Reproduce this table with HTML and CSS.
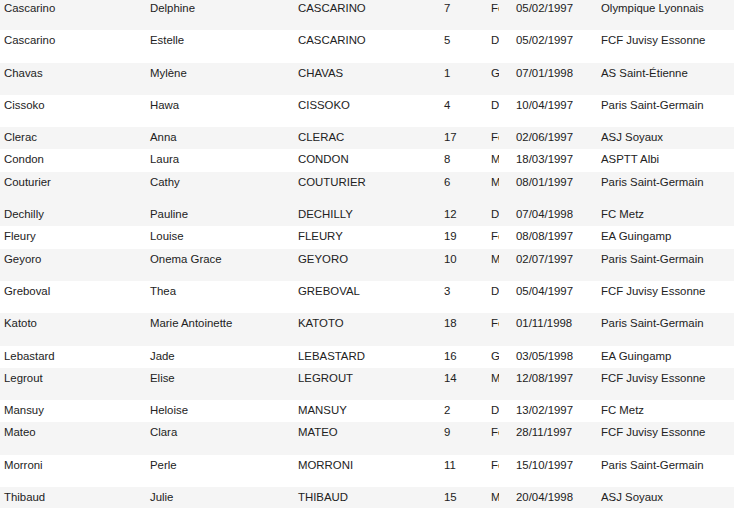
FILE: index.html
```html
<!DOCTYPE html>
<html>
<head>
<meta charset="utf-8">
<link rel="stylesheet" href="styles.css">
</head>
<body>
<div class="table">
  <div class="row tall grey"><div class="c">Cascarino</div><div class="c">Delphine</div><div class="c">CASCARINO</div><div class="c">7</div><div class="c pos"><span>Forward</span></div><div class="c">05/02/1997</div><div class="c">Olympique Lyonnais</div></div>
  <div class="row tall"><div class="c">Cascarino</div><div class="c">Estelle</div><div class="c">CASCARINO</div><div class="c">5</div><div class="c pos"><span>Defender</span></div><div class="c">05/02/1997</div><div class="c">FCF Juvisy Essonne</div></div>
  <div class="row tall grey"><div class="c">Chavas</div><div class="c">Mylène</div><div class="c">CHAVAS</div><div class="c">1</div><div class="c pos"><span>Goalkeeper</span></div><div class="c">07/01/1998</div><div class="c">AS Saint-Étienne</div></div>
  <div class="row tall"><div class="c">Cissoko</div><div class="c">Hawa</div><div class="c">CISSOKO</div><div class="c">4</div><div class="c pos"><span>Defender</span></div><div class="c">10/04/1997</div><div class="c">Paris Saint-Germain</div></div>
  <div class="row short grey"><div class="c">Clerac</div><div class="c">Anna</div><div class="c">CLERAC</div><div class="c">17</div><div class="c pos"><span>Forward</span></div><div class="c">02/06/1997</div><div class="c">ASJ Soyaux</div></div>
  <div class="row short"><div class="c">Condon</div><div class="c">Laura</div><div class="c">CONDON</div><div class="c">8</div><div class="c pos"><span>Midfielder</span></div><div class="c">18/03/1997</div><div class="c">ASPTT Albi</div></div>
  <div class="row tall grey"><div class="c">Couturier</div><div class="c">Cathy</div><div class="c">COUTURIER</div><div class="c">6</div><div class="c pos"><span>Midfielder</span></div><div class="c">08/01/1997</div><div class="c">Paris Saint-Germain</div></div>
  <div class="row short grey"><div class="c">Dechilly</div><div class="c">Pauline</div><div class="c">DECHILLY</div><div class="c">12</div><div class="c pos"><span>Defender</span></div><div class="c">07/04/1998</div><div class="c">FC Metz</div></div>
  <div class="row short"><div class="c">Fleury</div><div class="c">Louise</div><div class="c">FLEURY</div><div class="c">19</div><div class="c pos"><span>Forward</span></div><div class="c">08/08/1997</div><div class="c">EA Guingamp</div></div>
  <div class="row tall grey"><div class="c">Geyoro</div><div class="c">Onema Grace</div><div class="c">GEYORO</div><div class="c">10</div><div class="c pos"><span>Midfielder</span></div><div class="c">02/07/1997</div><div class="c">Paris Saint-Germain</div></div>
  <div class="row tall"><div class="c">Greboval</div><div class="c">Thea</div><div class="c">GREBOVAL</div><div class="c">3</div><div class="c pos"><span>Defender</span></div><div class="c">05/04/1997</div><div class="c">FCF Juvisy Essonne</div></div>
  <div class="row tall grey"><div class="c">Katoto</div><div class="c">Marie Antoinette</div><div class="c">KATOTO</div><div class="c">18</div><div class="c pos"><span>Forward</span></div><div class="c">01/11/1998</div><div class="c">Paris Saint-Germain</div></div>
  <div class="row short"><div class="c">Lebastard</div><div class="c">Jade</div><div class="c">LEBASTARD</div><div class="c">16</div><div class="c pos"><span>Goalkeeper</span></div><div class="c">03/05/1998</div><div class="c">EA Guingamp</div></div>
  <div class="row tall grey"><div class="c">Legrout</div><div class="c">Elise</div><div class="c">LEGROUT</div><div class="c">14</div><div class="c pos"><span>Midfielder</span></div><div class="c">12/08/1997</div><div class="c">FCF Juvisy Essonne</div></div>
  <div class="row short"><div class="c">Mansuy</div><div class="c">Heloise</div><div class="c">MANSUY</div><div class="c">2</div><div class="c pos"><span>Defender</span></div><div class="c">13/02/1997</div><div class="c">FC Metz</div></div>
  <div class="row tall grey"><div class="c">Mateo</div><div class="c">Clara</div><div class="c">MATEO</div><div class="c">9</div><div class="c pos"><span>Forward</span></div><div class="c">28/11/1997</div><div class="c">FCF Juvisy Essonne</div></div>
  <div class="row tall"><div class="c">Morroni</div><div class="c">Perle</div><div class="c">MORRONI</div><div class="c">11</div><div class="c pos"><span>Forward</span></div><div class="c">15/10/1997</div><div class="c">Paris Saint-Germain</div></div>
  <div class="row tall grey"><div class="c">Thibaud</div><div class="c">Julie</div><div class="c">THIBAUD</div><div class="c">15</div><div class="c pos"><span>Midfielder</span></div><div class="c">20/04/1998</div><div class="c">ASJ Soyaux</div></div>
</div>
</body>
</html>
```

FILE: styles.css
```css
html, body {
  margin: 0;
  padding: 0;
  background: #ffffff;
  overflow: hidden;
}
body {
  font-family: "Liberation Sans", Arial, sans-serif;
  font-size: 11.4px;
  color: #222222;
}
.table {
  margin-top: -2px;
  width: 760px;
}
.row {
  display: grid;
  grid-template-columns: 146px 148px 146px 47px 25px 85px 1fr;
  background: #ffffff;
}
.row.grey {
  background: #f5f5f5;
}
.row.tall {
  height: 32.3px;
}
.row.short {
  height: 22.3px;
}
.c {
  padding: 3px 0 0 4px;
  line-height: 14px;
  white-space: nowrap;
  overflow: hidden;
}
.pos span {
  display: block;
  width: 8px;
  overflow: hidden;
}
```
